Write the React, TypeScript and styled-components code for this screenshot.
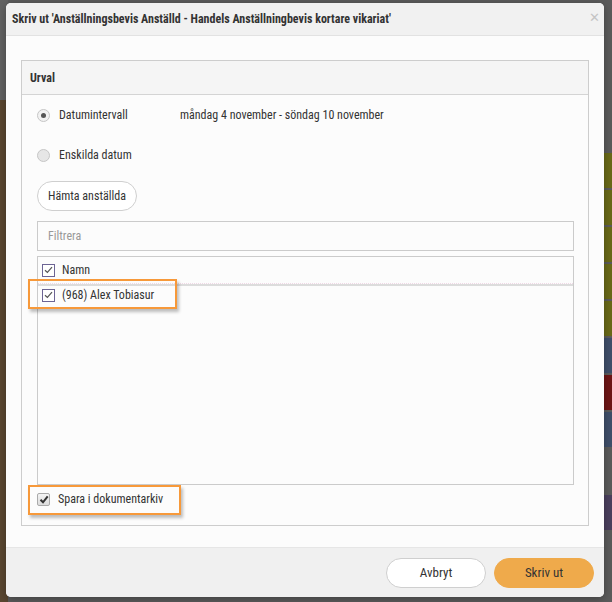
import React from "react";
import styled, { createGlobalStyle } from "styled-components";

const Global = createGlobalStyle`
  html, body { margin: 0; padding: 0; }
  body {
    width: 612px; height: 602px; overflow: hidden;
    font-family: "Roboto Condensed", "Liberation Sans Narrow", "Arial Narrow", Roboto, sans-serif;
    color: #333;
  }
`;

const Stage = styled.div`
  position: relative;
  width: 612px;
  height: 602px;
  display: flex;
  background: #5b5b5b;
  overflow: hidden;
`;

const BgLeft = styled.div`
  width: 8px;
  display: flex;
  flex-direction: column;
`;

const BgMid = styled.div`
  flex: 1;
`;

const BgRight = styled.div`
  width: 14px;
  display: flex;
  flex-direction: column;
  gap: 2px;
  padding-top: 153px;
  padding-left: 6px;
`;

const BgBlock = styled.div<{ $c: string; $h: number; $mt?: number }>`
  height: ${(p) => p.$h}px;
  margin-top: ${(p) => p.$mt ?? 0}px;
  background: ${(p) => p.$c};
`;

const Modal = styled.div`
  position: absolute;
  left: 6px;
  top: 3px;
  width: 598px;
  height: 594px;
  border-radius: 5px;
  background: #fcfcfc;
  display: flex;
  flex-direction: column;
  overflow: hidden;
  box-shadow: 0 2px 8px rgba(0, 0, 0, 0.3);
`;

const Header = styled.div`
  height: 32px;
  flex: none;
  display: flex;
  align-items: center;
  justify-content: space-between;
  padding: 0 4px 0 6px;
  background: #f1f1f1;
  border-bottom: 1px solid #e2e2e2;
`;

const Title = styled.div`
  font-size: 12px;
  font-weight: bold;
  color: #333;
`;

const Close = styled.div`
  font-family: "DejaVu Sans", sans-serif;
  font-size: 13px;
  color: #c4c4c4;
  line-height: 1;
  margin-top: -4px;
`;

const Body = styled.div`
  flex: 1;
  padding: 24px 15px 21px 15px;
  display: flex;
  flex-direction: column;
`;

const Panel = styled.div`
  flex: 1;
  border: 1px solid #cdcdcd;
  display: flex;
  flex-direction: column;
`;

const PanelHead = styled.div`
  height: 33px;
  flex: none;
  display: flex;
  align-items: center;
  padding-left: 8px;
  background: #f5f5f5;
  border-bottom: 1px solid #d4d4d4;
  font-size: 12px;
  font-weight: bold;
`;

const PanelBody = styled.div`
  flex: 1;
  padding: 0 14px 0 15px;
  display: flex;
  flex-direction: column;
`;

const RadioRow = styled.div`
  height: 40px;
  display: flex;
  align-items: center;
  font-size: 12px;
  color: #333;
`;

const Radio = styled.span<{ $on?: boolean }>`
  width: 11px;
  height: 11px;
  border-radius: 50%;
  border: 1px solid #c6c6c6;
  background: ${(p) => (p.$on ? "#f2f2f2" : "#e6e6e6")};
  display: flex;
  align-items: center;
  justify-content: center;
  margin-right: 9px;
  &::after {
    content: "";
    display: ${(p) => (p.$on ? "block" : "none")};
    width: 5px;
    height: 5px;
    border-radius: 50%;
    background: #555;
  }
`;

const RadioLabel = styled.span`
  width: 121px;
`;

const PillButton = styled.button<{ $primary?: boolean }>`
  height: 30px;
  width: 100px;
  border-radius: 15px;
  border: 1px solid ${(p) => (p.$primary ? "#efaa4b" : "#cfcfcf")};
  background: ${(p) => (p.$primary ? "#efaa4b" : "#fff")};
  font-family: inherit;
  font-size: 13px;
  color: #333;
  padding: 0;
  cursor: pointer;
`;

const FetchButton = styled(PillButton)`
  margin-top: 6px;
  font-size: 12px;
  height: 30px;
`;

const FilterInput = styled.div`
  margin-top: 10px;
  height: 28px;
  border: 1px solid #cbcbcb;
  background: #fcfcfc;
  display: flex;
  align-items: center;
  padding-left: 10px;
  font-size: 12px;
  color: #999;
`;

const Table = styled.div`
  margin-top: 5px;
  height: 227px;
  border: 1px solid #cbcbcb;
  display: flex;
  flex-direction: column;
`;

const TableHead = styled.div`
  height: 26px;
  flex: none;
  display: flex;
  align-items: center;
  padding-left: 4px;
  font-size: 12px;
  border-bottom: 1px dotted #f0d8e6;
  box-shadow: 0 2px 0 #dcdcdc;
`;

const TableRow = styled.div`
  height: 22px;
  display: flex;
  align-items: center;
  padding-left: 4px;
  font-size: 12px;
`;

const Check = styled.span`
  width: 11px;
  height: 11px;
  border: 1px solid #6c6494;
  background: #fff;
  margin-right: 7px;
  display: flex;
  align-items: center;
  justify-content: center;
  flex: none;
`;

const SaveRow = styled.div`
  margin-top: 7px;
  height: 14px;
  display: flex;
  align-items: center;
  font-size: 12px;
`;

const SaveBox = styled.span`
  width: 11px;
  height: 11px;
  border-radius: 2px;
  border: 1px solid #aaa;
  background: linear-gradient(#f4f4f4, #dcdcdc);
  margin-right: 8px;
  display: flex;
  align-items: center;
  justify-content: center;
`;

const Footer = styled.div`
  height: 49px;
  flex: none;
  border-top: 1px solid #e6e6e6;
  background: #f0f0f0;
  display: flex;
  align-items: center;
  justify-content: flex-end;
  gap: 8px;
  padding-right: 10px;
`;

const Highlight = styled.div<{ $l: number; $t: number; $w: number; $h: number }>`
  position: absolute;
  left: ${(p) => p.$l}px;
  top: ${(p) => p.$t}px;
  width: ${(p) => p.$w}px;
  height: ${(p) => p.$h}px;
  box-sizing: border-box;
  border: 2px solid #f7993a;
  box-shadow: 2px 3px 3px rgba(0, 0, 0, 0.25);
  pointer-events: none;
`;

const Tick = () => (
  <svg width="9" height="8" viewBox="0 0 9 8">
    <path d="M1 4.2 L3.4 6.5 L8 1.2" fill="none" stroke="#555" strokeWidth="1.2" />
  </svg>
);

const BoldTick = () => (
  <svg width="10" height="9" viewBox="0 0 10 9">
    <path d="M1.5 4.8 L4 7.3 L8.7 1.3" fill="none" stroke="#333" strokeWidth="2" />
  </svg>
);

const olive = "#6a6a18";
const blue = "#3f4f6a";

export default function App() {
  return (
    <>
      <Global />
      <Stage>
        <BgLeft>
          <BgBlock $c="#626262" $h={100} />
          <BgBlock $c="#5a4731" $h={502} />
        </BgLeft>
        <BgMid />
        <BgRight>
          <BgBlock $c={olive} $h={35} />
          <BgBlock $c={olive} $h={35} />
          <BgBlock $c={olive} $h={35} />
          <BgBlock $c={olive} $h={35} />
          <BgBlock $c={olive} $h={35} />
          <BgBlock $c={blue} $h={35} />
          <BgBlock $c="#6e1515" $h={35} />
          <BgBlock $c={blue} $h={35} />
          <BgBlock $c="#4b405e" $h={35} $mt={46} />
        </BgRight>
        <Modal>
          <Header>
            <Title>Skriv ut 'Anställningsbevis Anställd - Handels Anställningbevis kortare vikariat'</Title>
            <Close>✕</Close>
          </Header>
          <Body>
            <Panel>
              <PanelHead>Urval</PanelHead>
              <PanelBody>
                <RadioRow>
                  <Radio $on />
                  <RadioLabel>Datumintervall</RadioLabel>
                  <span>måndag 4 november - söndag 10 november</span>
                </RadioRow>
                <RadioRow>
                  <Radio />
                  <RadioLabel>Enskilda datum</RadioLabel>
                </RadioRow>
                <FetchButton>Hämta anställda</FetchButton>
                <FilterInput>Filtrera</FilterInput>
                <Table>
                  <TableHead>
                    <Check>
                      <Tick />
                    </Check>
                    Namn
                  </TableHead>
                  <TableRow>
                    <Check>
                      <Tick />
                    </Check>
                    (968) Alex Tobiasur
                  </TableRow>
                </Table>
                <SaveRow>
                  <SaveBox>
                    <BoldTick />
                  </SaveBox>
                  Spara i dokumentarkiv
                </SaveRow>
              </PanelBody>
            </Panel>
          </Body>
          <Footer>
            <PillButton>Avbryt</PillButton>
            <PillButton $primary>Skriv ut</PillButton>
          </Footer>
        </Modal>
        <Highlight $l={28} $t={279} $w={149} $h={30} />
        <Highlight $l={28} $t={485} $w={153} $h={30} />
      </Stage>
    </>
  );
}
